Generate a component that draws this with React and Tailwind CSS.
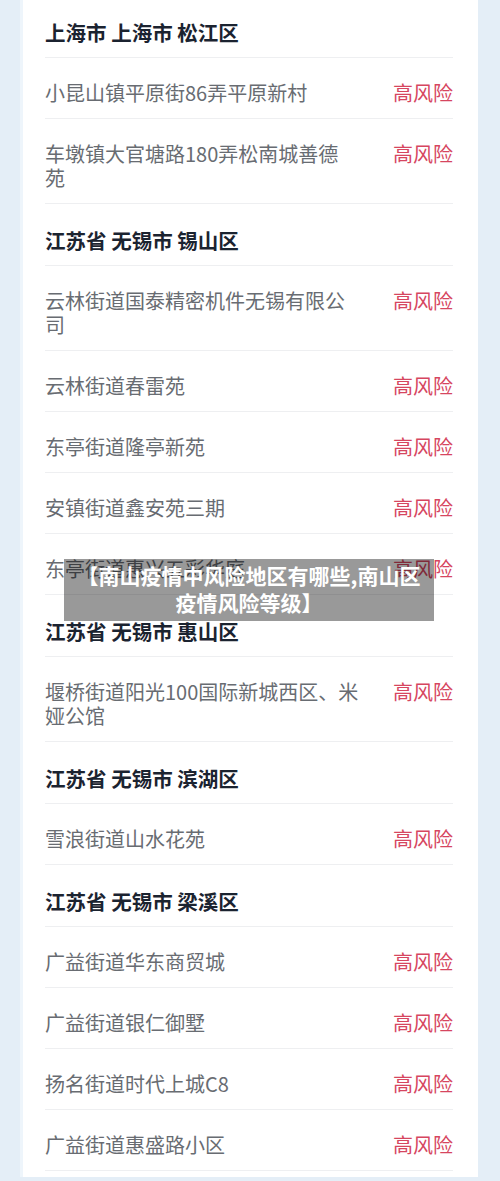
const font = { fontFamily: '"Noto Sans CJK SC", "Noto Sans", sans-serif' }

// 每一项：h = 地区标题；否则为地址行（lines 按原图换行）
const itens = [
  { h: '上海市 上海市 松江区' },
  { lines: ['小昆山镇平原街86弄平原新村'] },
  { lines: ['车墩镇大官塘路180弄松南城善德', '苑'] },
  { h: '江苏省 无锡市 锡山区' },
  { lines: ['云林街道国泰精密机件无锡有限公', '司'] },
  { lines: ['云林街道春雷苑'] },
  { lines: ['东亭街道隆亭新苑'] },
  { lines: ['安镇街道鑫安苑三期'] },
  { lines: ['东亭街道惠兴五彩华庭'] },
  { h: '江苏省 无锡市 惠山区' },
  { lines: ['堰桥街道阳光100国际新城西区、米', '娅公馆'] },
  { h: '江苏省 无锡市 滨湖区' },
  { lines: ['雪浪街道山水花苑'] },
  { h: '江苏省 无锡市 梁溪区' },
  { lines: ['广益街道华东商贸城'] },
  { lines: ['广益街道银仁御墅'] },
  { lines: ['扬名街道时代上城C8'] },
  { lines: ['广益街道惠盛路小区'] },
]

function Linha({ item }) {
  if (item.h) {
    return (
      <div className="border-b border-[#eeeff1] pt-[24px] pb-[13px] text-[20.5px] leading-[24px] font-bold text-[#1b2330]">
        {item.h}
      </div>
    )
  }
  return (
    <div className="flex items-start justify-between border-b border-[#eeeff1] pt-[23px] pb-[13px] text-[20px] leading-[24px]">
      <div className="text-[#686c72]">
        {item.lines.map((l) => (
          <div key={l}>{l}</div>
        ))}
      </div>
      <span className="shrink-0 text-[#d6465f]">高风险</span>
    </div>
  )
}

export default function App() {
  return (
    <div className="relative h-[1181px] w-[500px] overflow-hidden bg-[#e4eef7] pl-[20px] pr-[22px]" style={font}>
      <div className="h-full border-l-[3px] border-[#eef5fb] bg-white pl-[22px] pr-[25px]">
        <div className="-mt-[4px]">
          {itens.map((it, i) => (
            <Linha key={i} item={it} />
          ))}
        </div>
      </div>

      {/* faixa do título por cima da lista */}
      <div className="absolute left-[64px] top-[559px] flex h-[62px] w-[370px] flex-col items-center justify-center bg-black/40 text-center text-[21px] leading-[27px] font-bold text-white">
        <div className="-mt-[2px]">【南山疫情中风险地区有哪些,南山区</div>
        <div>疫情风险等级】</div>
      </div>
    </div>
  )
}
